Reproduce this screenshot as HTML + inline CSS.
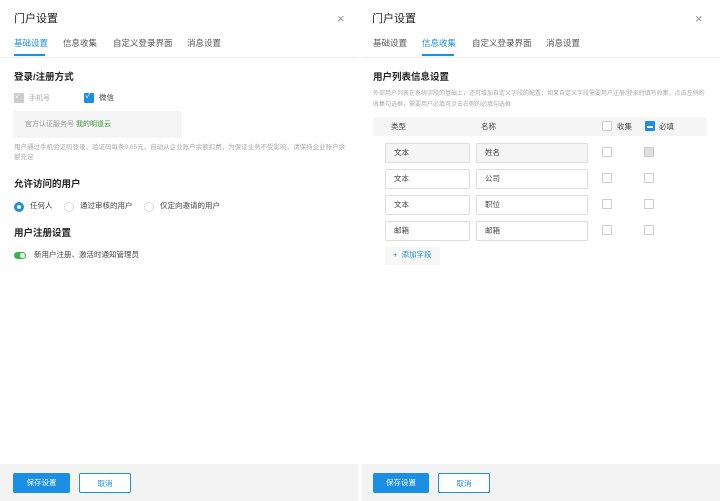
<!DOCTYPE html>
<html><head><meta charset="utf-8"><style>
*{margin:0;padding:0;box-sizing:border-box}
body{width:720px;height:501px;position:relative;background:#fff;font-family:"Liberation Sans","Noto Sans CJK SC",sans-serif;color:#333;overflow:hidden}
.a{position:absolute;white-space:nowrap;line-height:1}
.t{font-size:11px;color:#222}
.tab{font-size:8.5px;color:#555}
.act{color:#1a8fe3}
.h{font-size:9.5px;font-weight:bold;color:#222}
.s{font-size:7.5px;color:#444}
.g{font-size:6px;color:#aaa}
.cb{position:absolute;width:10px;height:10px;border:1px solid #ccc;border-radius:1px;background:#fff}
.cbb{background:#1a8fe3;border-color:#1a8fe3}
.cbg{background:#ccc;border-color:#ccc}
.in{position:absolute;height:20px;border:1px solid #ddd;border-radius:2px;font-size:7.5px;color:#444;padding-left:8px;line-height:18px}
.rd{position:absolute;width:10px;height:10px;border:1px solid #ddd;border-radius:50%}
.btn{position:absolute;height:20px;border-radius:2px;font-size:7.5px;text-align:center;line-height:20px}
</style></head><body>
<!-- left -->
<div class="a t" style="left:14px;top:14px">门户设置</div>
<div class="a" style="left:337px;top:12px;font-size:13px;color:#999">×</div>
<div class="a tab act" style="left:14px;top:39px">基础设置</div>
<div class="a tab" style="left:63px;top:39px">信息收集</div>
<div class="a tab" style="left:113px;top:39px">自定义登录界面</div>
<div class="a tab" style="left:187px;top:39px">消息设置</div>
<div class="a" style="left:14px;top:54px;width:31px;height:2px;background:#1a8fe3"></div>
<div class="a" style="left:0;top:57px;width:358px;height:1px;background:#eee"></div>
<div class="a h" style="left:14px;top:73px">登录/注册方式</div>
<div class="cb cbg" style="left:14px;top:93px"></div><div class="a" style="left:15.5px;top:92px;font-size:8px;color:#fff">✓</div>
<div class="a g" style="left:29px;top:95px;font-size:7px">手机号</div>
<div class="cb cbb" style="left:84px;top:93px"></div><div class="a" style="left:85.5px;top:92px;font-size:8px;color:#fff">✓</div>
<div class="a s" style="left:99px;top:94px">微信</div>
<div class="a" style="left:13px;top:111px;width:169px;height:27px;background:#f5f5f5"></div>
<div class="a" style="left:25px;top:121px;font-size:7px;color:#999">官方认证服务号 <span style="color:#3a9a3a">我的明道云</span></div>
<div class="a g" style="left:14px;top:143px;white-space:normal;width:336px;line-height:10px;font-size:6.5px">用户通过手机验证码登录，验证码每条0.05元，自动从企业账户余额扣费，为保证业务不受影响，请保持企业账户余额充足</div>
<div class="a h" style="left:14px;top:180px">允许访问的用户</div>
<div class="rd" style="left:14px;top:202px;border:3px solid #1a8fe3;background:#fff"></div>
<div class="a s" style="left:30px;top:202px">任何人</div>
<div class="rd" style="left:64px;top:202px"></div>
<div class="a s" style="left:80px;top:202px">通过审核的用户</div>
<div class="rd" style="left:144px;top:202px"></div>
<div class="a s" style="left:160px;top:202px">仅定向邀请的用户</div>
<div class="a h" style="left:14px;top:229px">用户注册设置</div>
<div class="a" style="left:14px;top:252px;width:12px;height:7px;border-radius:4px;background:#3cb64a"></div>
<div class="a" style="left:20px;top:253px;width:5px;height:5px;border-radius:50%;background:#fff"></div>
<div class="a s" style="left:34px;top:251px">新用户注册、激活时通知管理员</div>
<!-- right -->
<div class="a t" style="left:372px;top:14px">门户设置</div>
<div class="a" style="left:695px;top:12px;font-size:13px;color:#999">×</div>
<div class="a tab" style="left:373px;top:39px">基础设置</div>
<div class="a tab act" style="left:422px;top:39px">信息收集</div>
<div class="a tab" style="left:472px;top:39px">自定义登录界面</div>
<div class="a tab" style="left:546px;top:39px">消息设置</div>
<div class="a" style="left:422px;top:54px;width:32px;height:2px;background:#1a8fe3"></div>
<div class="a" style="left:362px;top:57px;width:358px;height:1px;background:#eee"></div>
<div class="a h" style="left:373px;top:73px">用户列表信息设置</div>
<div class="a g" style="left:373px;top:89px;white-space:normal;width:335px;line-height:11px">外部用户列表在系统字段的基础上，还可增加自定义字段的配置；如果自定义字段需要用户注册/登录时填写收集，点击左侧的收集勾选框，需要用户必填可点击右侧的必填勾选框</div>
<div class="a" style="left:373px;top:117px;width:334px;height:19px;background:#f5f5f5"></div>
<div class="a s" style="left:391px;top:123px">类型</div>
<div class="a s" style="left:481px;top:123px">名称</div>
<div class="cb" style="left:602px;top:121px"></div><div class="a s" style="left:617px;top:123px">收集</div>
<div class="cb cbb" style="left:645px;top:121px"></div><div class="a" style="left:647px;top:126px;width:6px;height:1.5px;background:#fff"></div><div class="a s" style="left:659px;top:123px">必填</div>
<div class="in" style="left:385px;top:143px;width:85px;background:#f5f5f5">文本</div>
<div class="in" style="left:476px;top:143px;width:112px;background:#f5f5f5">姓名</div>
<div class="cb" style="left:602px;top:147px"></div><div class="cb cbg" style="left:644px;top:147px;background:#e0e0e0"></div>
<div class="in" style="left:385px;top:169px;width:85px">文本</div>
<div class="in" style="left:476px;top:169px;width:112px">公司</div>
<div class="cb" style="left:602px;top:173px"></div><div class="cb" style="left:644px;top:173px"></div>
<div class="in" style="left:385px;top:195px;width:85px">文本</div>
<div class="in" style="left:476px;top:195px;width:112px">职位</div>
<div class="cb" style="left:602px;top:199px"></div><div class="cb" style="left:644px;top:199px"></div>
<div class="in" style="left:385px;top:221px;width:85px">邮箱</div>
<div class="in" style="left:476px;top:221px;width:112px">邮箱</div>
<div class="cb" style="left:602px;top:225px"></div><div class="cb" style="left:644px;top:225px"></div>
<div class="a" style="left:385px;top:247px;width:55px;height:18px;background:#f7f7f7"></div>
<div class="a" style="left:393px;top:251px;font-size:7.5px;color:#1a8fe3">+&nbsp; 添加字段</div>
<!-- footers -->
<div class="a" style="left:0;top:464px;width:358px;height:37px;background:#f3f3f3"></div>
<div class="a" style="left:362px;top:464px;width:358px;height:37px;background:#f3f3f3"></div>
<div class="btn" style="left:13px;top:473px;width:57px;background:#1a8fe3;color:#fff">保存设置</div>
<div class="btn" style="left:79px;top:473px;width:52px;background:#fff;border:1px solid #1a8fe3;color:#1a8fe3">取消</div>
<div class="btn" style="left:373px;top:473px;width:56px;background:#1a8fe3;color:#fff">保存设置</div>
<div class="btn" style="left:438px;top:473px;width:52px;background:#fff;border:1px solid #1a8fe3;color:#1a8fe3">取消</div>
</body></html>
